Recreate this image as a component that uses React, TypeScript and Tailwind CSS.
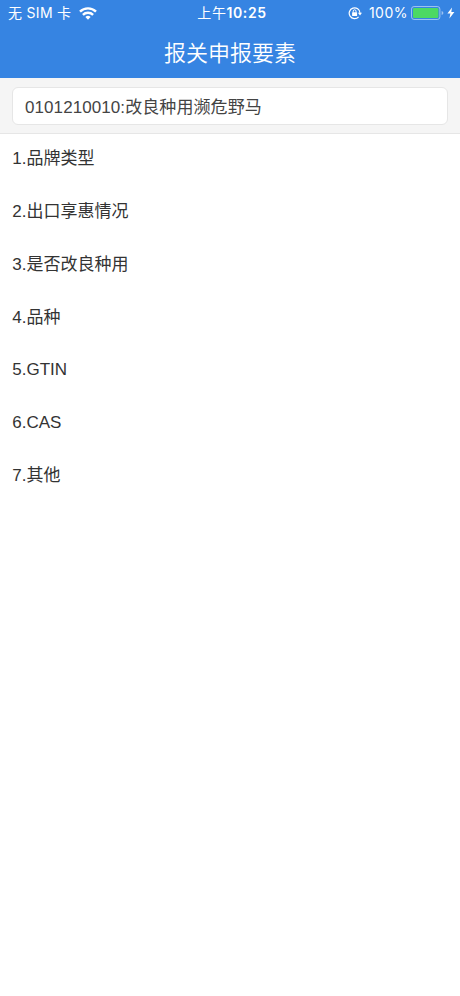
const elements = [
  "品牌类型",
  "出口享惠情况",
  "是否改良种用",
  "品种",
  "GTIN",
  "CAS",
  "其他",
];

function WifiIcon() {
  return (
    <svg width="18" height="13" viewBox="0 0 18 13" fill="none" stroke="currentColor" strokeWidth="2.4">
      <path d="M1 4.7A11.3 11.3 0 0 1 17 4.7" />
      <path d="M3.9 7.9A7.2 7.2 0 0 1 14.1 7.9" />
      <path d="M6.4 10A3.9 3.9 0 0 1 11.6 10L9 12.7Z" fill="currentColor" stroke="none" />
    </svg>
  );
}

function RotationLockIcon() {
  return (
    <svg width="14" height="14" viewBox="0 0 14 14" fill="none" stroke="currentColor">
      <path d="M10.6 10.9A5.4 5.4 0 1 1 12 7" strokeWidth="1.2" />
      <path d="M9.9 6.7H14L12 9.4Z" fill="currentColor" stroke="none" />
      <rect x="4.1" y="6.2" width="5" height="3.9" rx="0.5" fill="currentColor" stroke="none" />
      <path d="M5.2 6.5V5.2A1.4 1.4 0 0 1 8 5.2V6.5" strokeWidth="1" />
    </svg>
  );
}

function BatteryIcon() {
  return (
    <svg width="33" height="15" viewBox="0 0 33 15">
      <rect x="0.5" y="0.5" width="28.4" height="13" rx="2.6" fill="none" stroke="#fff" strokeOpacity="0.5" />
      <rect x="2" y="2" width="25.4" height="10" rx="1.2" fill="#4cd964" />
      <path d="M30.6 5Q32.4 5.6 32.4 7T30.6 9Z" fill="#fff" fillOpacity="0.5" />
    </svg>
  );
}

function BoltIcon() {
  return (
    <svg width="8" height="12" viewBox="0 0 8 12" fill="currentColor">
      <path d="M5 0.5L0.4 6.6H3.4L2.4 11.4L7.4 5H4.3Z" />
    </svg>
  );
}

function StatusBar() {
  return (
    <div className="grid h-[26px] grid-cols-3 items-center pl-[8px] pr-[5px] font-[Inter,'Noto_Sans_CJK_SC',sans-serif] text-[14px] leading-none">
      <div className="flex items-center gap-[8px]">
        <span className="whitespace-nowrap tracking-[0.3px]">无 SIM 卡</span>
        <WifiIcon />
      </div>
      <div className="pl-px text-center tracking-[0.6px]">
        上午<span className="font-semibold">10:25</span>
      </div>
      <div className="flex items-center justify-end">
        <RotationLockIcon />
        <span className="ml-[7px] mr-[3px] tracking-[0.5px]">100%</span>
        <BatteryIcon />
        <span className="ml-[3px]">
          <BoltIcon />
        </span>
      </div>
    </div>
  );
}

export default function App() {
  return (
    <div className="min-h-screen bg-white font-['Liberation_Sans','Noto_Sans_CJK_SC',sans-serif] text-[17px] text-[#333]">
      <header className="h-[78px] bg-[#3684e2] text-white">
        <StatusBar />
        <h1 className="pt-px text-center text-[22px] font-[350] leading-[54px]">报关申报要素</h1>
      </header>
      <div className="h-14 border-b border-[#e6e6e6] bg-[#f5f5f5] px-3 pt-[9px]">
        <input
          className="block h-[38px] w-full rounded-[6px] border border-[#e6e6e6] bg-white px-[12px] pb-[2px] tracking-[0.08px] text-[#444] outline-none"
          defaultValue="0101210010:改良种用濒危野马"
        />
      </div>
      <ul className="px-3">
        {elements.map((name, i) => (
          <li key={name} className="flex h-[52.75px] items-start pt-[12.4px] pl-[0.3px] leading-[26px]">
            {i + 1}.{name}
          </li>
        ))}
      </ul>
    </div>
  );
}
